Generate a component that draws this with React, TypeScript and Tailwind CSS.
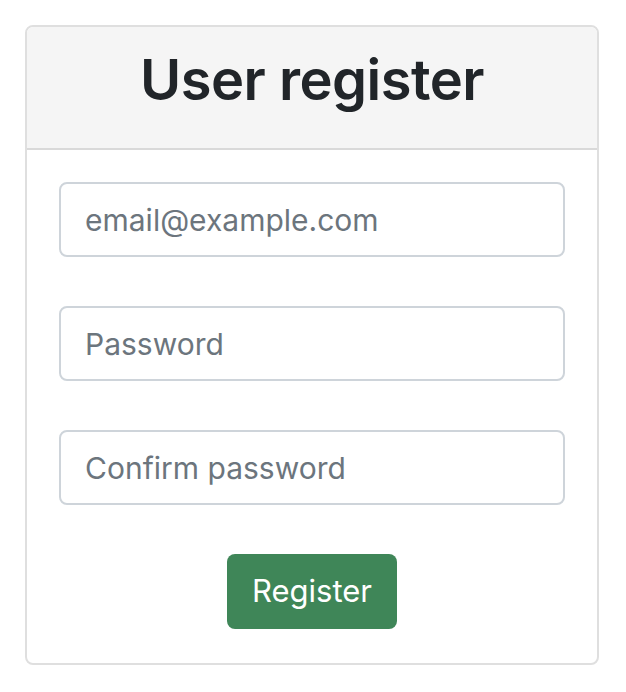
export default function App() {
  const fields = [
    { type: 'email', placeholder: 'email@example.com' },
    { type: 'password', placeholder: 'Password' },
    { type: 'password', placeholder: 'Confirm password' },
  ];

  return (
    <div className="min-h-screen bg-white pt-[25px] pl-[25px] font-['Inter',sans-serif]">
      <div className="w-[574px] rounded-[8px] border-2 border-[#dfdfdf] overflow-hidden">
        <div className="h-[123px] bg-[#f5f5f5] border-b-2 border-[#d9d9d9] flex items-center justify-center">
          <h1 className="text-[56px] leading-none font-semibold text-[#212529] tracking-[-0.5px] -mt-[15px]">
            User register
          </h1>
        </div>
        <form className="px-[32px] pt-[32px] pb-[34px] flex flex-col gap-[49px]">
          {fields.map((f) => (
            <input
              key={f.placeholder}
              type={f.type}
              placeholder={f.placeholder}
              className="h-[75px] w-full rounded-[8px] border-2 border-[#ced4da] bg-white px-[24px] text-[30px] text-[#212529] placeholder:text-[#6c757d] outline-none"
            />
          ))}
          <div className="flex justify-center">
            <button
              type="button"
              className="h-[75px] w-[170px] rounded-[8px] bg-[#3f8658] text-white text-[31px]"
            >
              Register
            </button>
          </div>
        </form>
      </div>
    </div>
  );
}
